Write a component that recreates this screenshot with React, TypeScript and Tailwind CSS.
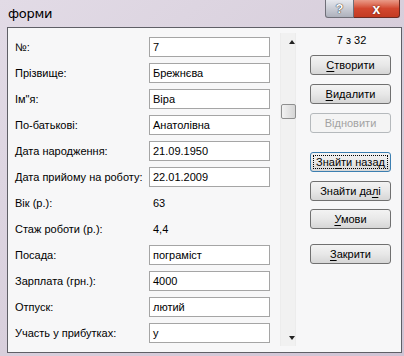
import React from 'react'

type Row = { label: string; value: string; input: boolean }

const rows: Row[] = [
  { label: '№:', value: '7', input: true },
  { label: 'Прізвище:', value: 'Брежнєва', input: true },
  { label: 'Ім"я:', value: 'Віра', input: true },
  { label: 'По-батькові:', value: 'Анатолівна', input: true },
  { label: 'Дата народження:', value: '21.09.1950', input: true },
  { label: 'Дата прийому на роботу:', value: '22.01.2009', input: true },
  { label: 'Вік (р.):', value: '63', input: false },
  { label: 'Стаж роботи (р.):', value: '4,4', input: false },
  { label: 'Посада:', value: 'пограміст', input: true },
  { label: 'Зарплата (грн.):', value: '4000', input: true },
  { label: 'Отпуск:', value: 'лютий', input: true },
  { label: 'Участь у прибутках:', value: 'у', input: true },
]

function Btn({ pre, u, post, mt = 'mt-0', disabled = false, focused = false }: {
  pre: string; u: string; post: string; mt?: string; disabled?: boolean; focused?: boolean
}) {
  if (disabled) {
    return (
      <div className={`${mt} h-[20px] w-[81px] rounded-[3px] border border-[#b5b9bc] bg-[#f4f4f4] flex items-center justify-center whitespace-nowrap text-[#a3a3a3]`}>
        {pre}{u}{post}
      </div>
    )
  }
  return (
    <div className={`${mt} h-[20px] w-[81px] rounded-[3px] border ${focused ? 'border-[#3c7fb1]' : 'border-[#707070]'} bg-gradient-to-b from-[#f3f3f3] via-[#e8e8e8] to-[#d6d6d6] flex items-center justify-center p-[2px] text-black`}>
      <div className={`w-full h-full flex items-center justify-center whitespace-nowrap ${focused ? 'border border-dotted border-black' : ''}`}>
        <span>{pre}<span className="underline underline-offset-[2px]">{u}</span>{post}</span>
      </div>
    </div>
  )
}

export default function App() {
  return (
    <div className="w-[404px] h-[356px] overflow-hidden bg-gradient-to-br from-[#e2dbe6] via-[#d8cfdc] to-[#cfc3d4] text-[11px] leading-none font-['Liberation_Sans',Arial,sans-serif]">
      {/* title bar */}
      <div className="h-[27px] flex items-start justify-between pl-[8px] pr-[4px]">
        <span className="mt-[7px] text-[13px] text-black font-['DejaVu_Sans',sans-serif] tracking-[-0.3px]">форми</span>
        <div className="flex">
          <div className="w-[29px] h-[18px] rounded-bl-[3px] border border-t-0 border-[#6f6f78] bg-gradient-to-b from-[#e6e8ee] to-[#aeb1bc] flex items-center justify-center text-[13px] font-bold text-white [text-shadow:0_0_1px_#222,0_0_1px_#222]">?</div>
          <div className="w-[46px] h-[18px] rounded-br-[3px] border border-l-0 border-t-0 border-[#6b2a22] bg-gradient-to-b from-[#e99a88] via-[#d2472f] to-[#c33b22] flex items-center justify-center text-[14px] font-bold text-white [text-shadow:0_0_2px_#5a1a10]">x</div>
        </div>
      </div>

      {/* client area */}
      <div className="ml-[7px] w-[395px] h-[326px] border border-[#5f5f66] bg-[#f7f7f8] flex">
        {/* fields */}
        <div className="w-[272px] pl-[7px] pt-[6px] flex flex-col">
          {rows.map(r => (
            <div key={r.label} className="h-[26px] flex items-center">
              <span className="w-[134px] whitespace-nowrap text-black">{r.label}</span>
              {r.input ? (
                <div className="w-[121px] h-[20px] border border-[#a5a5a5] bg-white flex items-center pl-[3px] text-black">{r.value}</div>
              ) : (
                <span className="pl-[4px] text-black">{r.value}</span>
              )}
            </div>
          ))}
        </div>

        {/* scrollbar */}
        <div className="mt-[5px] w-[16px] h-[313px] bg-[#f1f1f1] border-x border-[#ececec] flex flex-col items-center">
          <div className="h-[17px] flex items-center justify-center pl-[8px]">
            <div className="w-0 h-0 border-x-[3px] border-x-transparent border-b-[4px] border-b-[#222]" />
          </div>
          <div className="mt-[54px] w-[15px] h-[15px] rounded-[2px] border border-[#8e8f8f] bg-gradient-to-r from-[#f2f2f2] to-[#d5d5d5]" />
          <div className="flex-1" />
          <div className="h-[17px] flex items-center justify-center pl-[8px]">
            <div className="w-0 h-0 border-x-[3px] border-x-transparent border-t-[4px] border-t-[#222]" />
          </div>
        </div>

        {/* buttons */}
        <div className="ml-[14px] pt-[2px] flex flex-col">
          <div className="h-[20px] flex items-center justify-center pl-[2px] text-black">7 з 32</div>
          <Btn pre="" u="С" post="творити" mt="mt-[5px]" />
          <Btn pre="" u="В" post="идалити" mt="mt-[9px]" />
          <Btn pre="Відновити" u="" post="" mt="mt-[9px]" disabled />
          <Btn pre="Зна" u="й" post="ти назад" mt="mt-[19px]" focused />
          <Btn pre="Знайти да" u="л" post="і" mt="mt-[9px]" />
          <Btn pre="" u="У" post="мови" mt="mt-[8px]" />
          <Btn pre="" u="З" post="акрити" mt="mt-[15px]" />
        </div>
      </div>
    </div>
  )
}
